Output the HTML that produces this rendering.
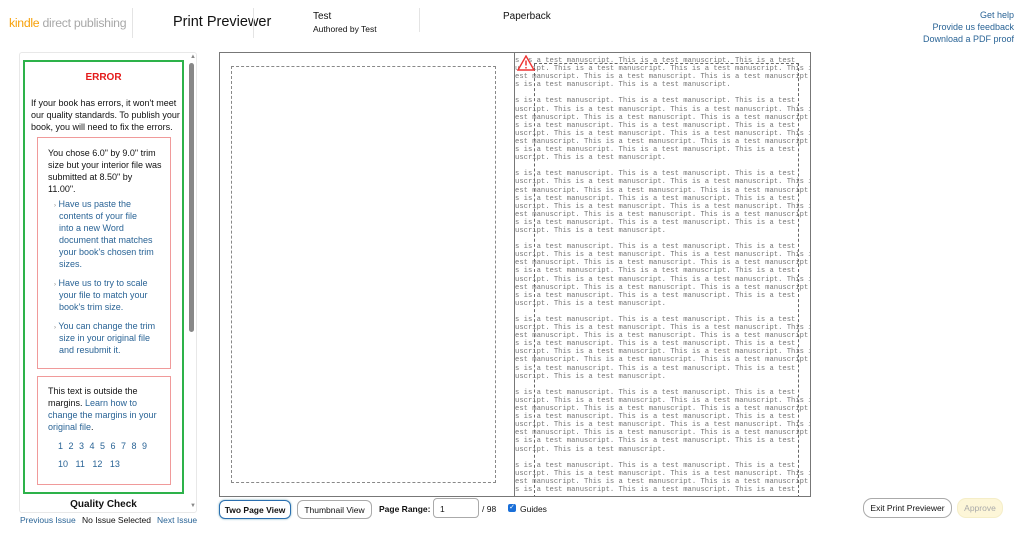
<!DOCTYPE html>
<html><head><style>
*{margin:0;padding:0;box-sizing:border-box}
body{width:1024px;height:538px;background:#fff;font-family:"Liberation Sans",sans-serif;position:relative;overflow:hidden;color:#111}
.a{position:absolute;white-space:nowrap}
.lk{color:#2a6496}
.sb{font-size:9px;line-height:12px}
.ch{font-size:6px;color:#888;line-height:0}
.pg{position:absolute;top:52px;height:445px;border:1px solid #777;overflow:hidden}
.ms{position:absolute;left:0;font-family:"Liberation Mono",monospace;font-size:7.2px;line-height:8.1px;color:#777;white-space:pre}
.btn{position:absolute;height:19px;border:1px solid #aaa;border-radius:6px;font-size:8.5px;display:flex;align-items:center;justify-content:center;background:#fff}
</style></head><body>
<div class="a" style="left:9px;top:16px;font-size:12.3px;letter-spacing:-0.3px"><span style="color:#f7a10b">kindle</span> <span style="color:#a8a8a8">direct publishing</span></div>
<div class="a" style="left:132px;top:8px;width:1px;height:30px;background:#e4e4e4"></div>
<div class="a" style="left:173px;top:14px;font-size:14.5px">Print Previewer</div>
<div class="a" style="left:253px;top:8px;width:1px;height:30px;background:#e4e4e4"></div>
<div class="a" style="left:313px;top:11px;font-size:10px">Test</div>
<div class="a" style="left:313px;top:24px;font-size:8.5px">Authored by Test</div>
<div class="a" style="left:419px;top:8px;width:1px;height:24px;background:#e4e4e4"></div>
<div class="a" style="left:503px;top:11px;font-size:10px">Paperback</div>
<div class="a lk" style="right:10px;top:9px;font-size:9px;text-align:right;line-height:12px">Get help<br>Provide us feedback<br>Download a PDF proof</div>

<div class="a" style="left:19px;top:52px;width:178px;height:461px;border:1px solid #e8e8e8;border-radius:3px"></div>
<div class="a" style="left:190px;top:54px;font-size:6px;color:#888">▲</div>
<div class="a" style="left:189px;top:63px;width:5px;height:269px;background:#888;border-radius:3px"></div>
<div class="a" style="left:190px;top:503px;font-size:6px;color:#888">▼</div>
<div class="a" style="left:23px;top:60px;width:161px;height:434px;border:2px solid #2db24a"></div>
<div class="a" style="left:24px;top:72px;width:159px;text-align:center;color:#e41b1b;font-weight:bold;font-size:10px">ERROR</div>
<div class="a sb" style="left:31px;top:97px">If your book has errors, it won't meet<br>our quality standards. To publish your<br>book, you will need to fix the errors.</div>
<div class="a" style="left:37px;top:137px;width:134px;height:232px;border:1px solid #f09a9a"></div>
<div class="a sb" style="left:48px;top:147px">You chose 6.0" by 9.0" trim<br>size but your interior file was<br>submitted at 8.50" by<br>11.00".</div>
<div class="a sb lk" style="left:54px;top:198px"><span class="ch">›</span> Have us paste the<br>&nbsp; contents of your file<br>&nbsp; into a new Word<br>&nbsp; document that matches<br>&nbsp; your book's chosen trim<br>&nbsp; sizes.</div>
<div class="a sb lk" style="left:54px;top:277px"><span class="ch">›</span> Have us to try to scale<br>&nbsp; your file to match your<br>&nbsp; book's trim size.</div>
<div class="a sb lk" style="left:54px;top:320px"><span class="ch">›</span> You can change the trim<br>&nbsp; size in your original file<br>&nbsp; and resubmit it.</div>
<div class="a" style="left:37px;top:376px;width:134px;height:109px;border:1px solid #f09a9a"></div>
<div class="a sb" style="left:48px;top:385px">This text is outside the<br>margins. <span class="lk">Learn how to<br>change the margins in your<br>original file</span>.</div>
<div class="a sb lk" style="left:58px;top:440px;word-spacing:3px">1 2 3 4 5 6 7 8 9</div>
<div class="a sb lk" style="left:58px;top:458px;word-spacing:5px">10 11 12 13</div>
<div class="a" style="left:24px;top:499px;width:159px;text-align:center;font-weight:bold;font-size:10px">Quality Check</div>
<div class="a lk" style="left:20px;top:515px;font-size:8.5px">Previous Issue</div>
<div class="a" style="left:82px;top:515px;font-size:8.5px">No Issue Selected</div>
<div class="a lk" style="left:157px;top:515px;font-size:8.5px">Next Issue</div>

<div class="pg" style="left:219px;width:296px"><div class="a" style="left:11px;top:13px;width:265px;height:417px;border:1.5px dashed #888"></div></div>
<div class="pg" style="left:514px;width:297px" id="rp">
<div class="ms" style="top:4px">s is a test manuscript. This is a test manuscript. This is a test
uscript. This is a test manuscript. This is a test manuscript. This is
est manuscript. This is a test manuscript. This is a test manuscript
s is a test manuscript. This is a test manuscript.

s is a test manuscript. This is a test manuscript. This is a test
uscript. This is a test manuscript. This is a test manuscript. This is
est manuscript. This is a test manuscript. This is a test manuscript
s is a test manuscript. This is a test manuscript. This is a test
uscript. This is a test manuscript. This is a test manuscript. This is
est manuscript. This is a test manuscript. This is a test manuscript
s is a test manuscript. This is a test manuscript. This is a test
uscript. This is a test manuscript.

s is a test manuscript. This is a test manuscript. This is a test
uscript. This is a test manuscript. This is a test manuscript. This is
est manuscript. This is a test manuscript. This is a test manuscript
s is a test manuscript. This is a test manuscript. This is a test
uscript. This is a test manuscript. This is a test manuscript. This is
est manuscript. This is a test manuscript. This is a test manuscript
s is a test manuscript. This is a test manuscript. This is a test
uscript. This is a test manuscript.

s is a test manuscript. This is a test manuscript. This is a test
uscript. This is a test manuscript. This is a test manuscript. This is
est manuscript. This is a test manuscript. This is a test manuscript
s is a test manuscript. This is a test manuscript. This is a test
uscript. This is a test manuscript. This is a test manuscript. This is
est manuscript. This is a test manuscript. This is a test manuscript
s is a test manuscript. This is a test manuscript. This is a test
uscript. This is a test manuscript.

s is a test manuscript. This is a test manuscript. This is a test
uscript. This is a test manuscript. This is a test manuscript. This is
est manuscript. This is a test manuscript. This is a test manuscript
s is a test manuscript. This is a test manuscript. This is a test
uscript. This is a test manuscript. This is a test manuscript. This is
est manuscript. This is a test manuscript. This is a test manuscript
s is a test manuscript. This is a test manuscript. This is a test
uscript. This is a test manuscript.

s is a test manuscript. This is a test manuscript. This is a test
uscript. This is a test manuscript. This is a test manuscript. This is
est manuscript. This is a test manuscript. This is a test manuscript
s is a test manuscript. This is a test manuscript. This is a test
uscript. This is a test manuscript. This is a test manuscript. This is
est manuscript. This is a test manuscript. This is a test manuscript
s is a test manuscript. This is a test manuscript. This is a test
uscript. This is a test manuscript.

s is a test manuscript. This is a test manuscript. This is a test
uscript. This is a test manuscript. This is a test manuscript. This is
est manuscript. This is a test manuscript. This is a test manuscript
s is a test manuscript. This is a test manuscript. This is a test</div>
<div class="a" style="left:19px;top:10px;width:265px;height:440px;border-left:1.5px dashed #666;border-right:1.5px dashed #666;border-top:1.5px dashed #666"></div>
<svg class="a" style="left:2px;top:2px" width="18" height="16" viewBox="0 0 18 16"><path d="M9 1L17 15H1Z" fill="#fff" stroke="#e33" stroke-width="1.4"/><path d="M9 5.5V10.5M9 12v1.5" stroke="#e33" stroke-width="1.5"/></svg>
</div>

<div class="btn" style="left:219px;top:500px;width:72px;border:1.5px solid #2a6fb0;font-weight:bold;box-shadow:0 0 2px #7ab">Two Page View</div>
<div class="btn" style="left:297px;top:500px;width:75px">Thumbnail View</div>
<div class="a" style="left:379px;top:504px;font-size:8.5px;font-weight:bold">Page Range:</div>
<div class="a" style="left:433px;top:498px;width:46px;height:20px;border:1px solid #aaa;border-radius:4px;font-size:8.5px;padding:5px 0 0 6px">1</div>
<div class="a" style="left:482px;top:504px;font-size:8.5px">/ 98</div>
<div class="a" style="left:508px;top:504px;width:8px;height:8px;background:#1a6fd8;border-radius:2px;color:#fff;font-size:7px;line-height:8px;text-align:center">✓</div>
<div class="a" style="left:520px;top:504px;font-size:8.5px">Guides</div>
<div class="btn" style="left:863px;top:498px;width:89px;height:20px;border-radius:9px">Exit Print Previewer</div>
<div class="btn" style="left:957px;top:498px;width:46px;height:20px;border-radius:9px;background:#fdf6d8;border-color:#f5eec8;color:#aaa">Approve</div>
</body></html>
